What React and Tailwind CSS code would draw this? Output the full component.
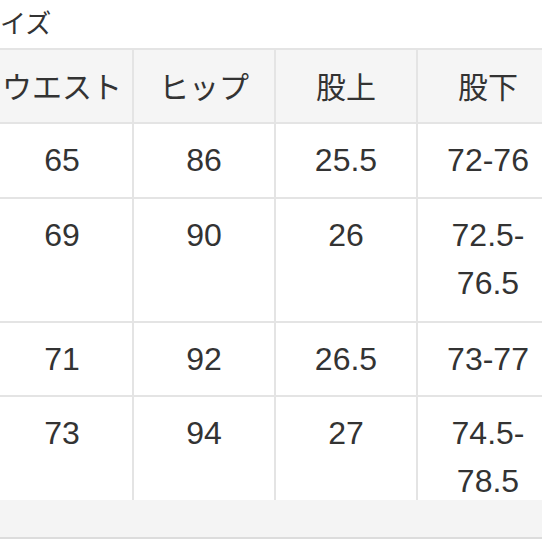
export default function App() {
  const font = { fontFamily: '"Liberation Sans", "Noto Sans CJK JP", sans-serif' };
  const header = ["ウエスト", "ヒップ", "股上", "股下"];
  const rows = [
    { h: "h-[75px]", cells: ["65", "86", "25.5", "72-76"] },
    { h: "h-[124px]", cells: ["69", "90", "26", "72.5-\n76.5"] },
    { h: "h-[74px]", cells: ["71", "92", "26.5", "73-77"] },
    { h: "h-[124px]", cells: ["73", "94", "27", "74.5-\n78.5"] },
  ];
  return (
    <div className="w-[542px] h-[542px] overflow-hidden bg-white text-[#333]" style={font}>
      <div className="h-[48px] flex items-center -ml-[26px] text-[26px] leading-none pb-[1px]">サイズ</div>
      <div className="h-[452px] overflow-hidden">
        <div className="-ml-[8px] w-[568px] border-t-2 border-[#e4e4e4]">
          <div className="flex h-[74px] bg-[#f5f5f5] border-b-2 border-[#e4e4e4]">
            {header.map((t, i) => (
              <div key={i} className="w-[142px] shrink-0 border-r-2 border-[#e4e4e4] flex items-center justify-center text-[30px] pt-[2px]">
                {t}
              </div>
            ))}
          </div>
          {rows.map((r, ri) => (
            <div key={ri} className={`flex ${r.h} border-b-2 border-[#e4e4e4]`}>
              {r.cells.map((c, ci) => (
                <div key={ci} className="w-[142px] shrink-0 border-r-2 border-[#e4e4e4] text-center text-[32px] leading-[48px] pt-[12px] whitespace-pre-line">
                  {c}
                </div>
              ))}
            </div>
          ))}
        </div>
      </div>
      <div className="h-[39px] bg-[#f4f4f4] border-b-2 border-[#dcdcdc]"></div>
    </div>
  );
}
